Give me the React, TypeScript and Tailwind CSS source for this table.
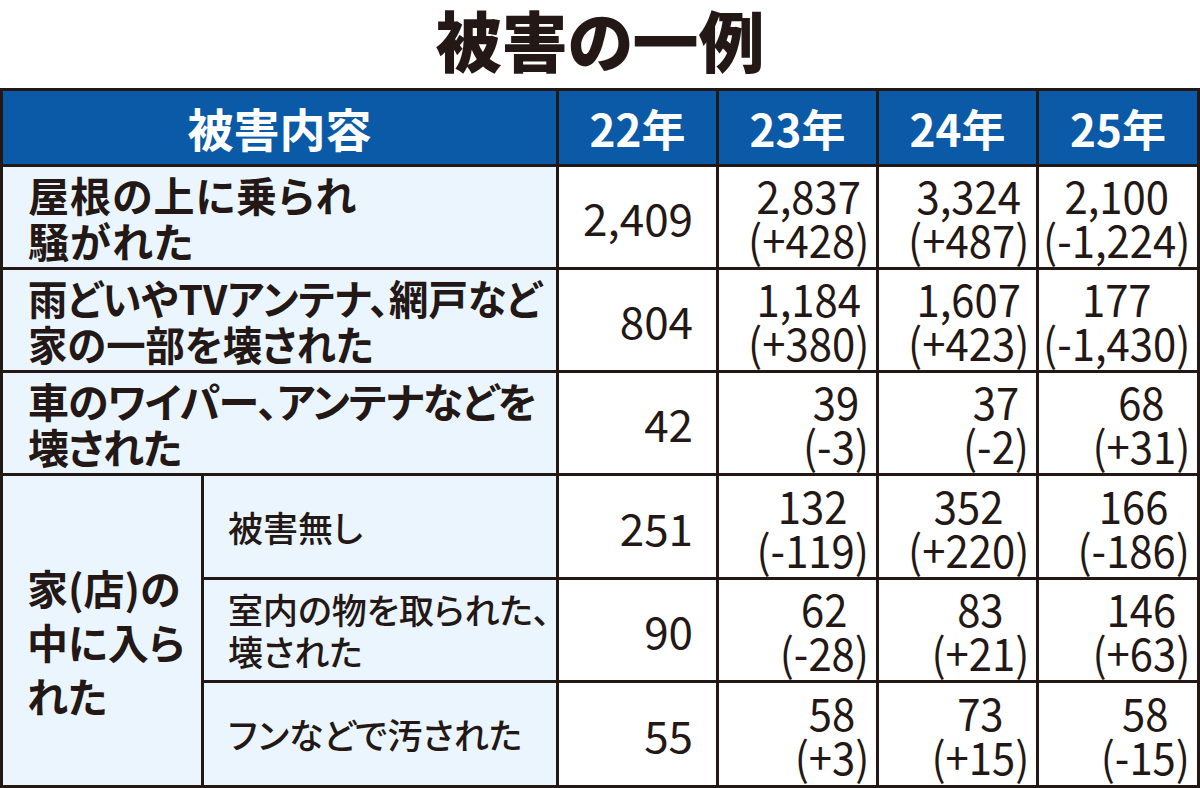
const jp = "font-['Noto_Sans_CJK_JP','Noto_Sans_CJK_SC',sans-serif]";

type Val = { n: string; d?: string };

const rows: { label: React.ReactNode; fit: string; base: string; vals: Val[] }[] = [
  {
    label: (
      <>
        屋根の上に乗られ
        <br />
        騒がれた
      </>
    ),
    fit: 'tracking-[1px]',
    base: '2,409',
    vals: [
      { n: '2,837', d: '(+428)' },
      { n: '3,324', d: '(+487)' },
      { n: '2,100', d: '(-1,224)' },
    ],
  },
  {
    label: (
      <>
        雨どいやTVアンテナ、網戸など
        <br />
        家の一部を壊された
      </>
    ),
    fit: 'scale-x-[0.96]',
    base: '804',
    vals: [
      { n: '1,184', d: '(+380)' },
      { n: '1,607', d: '(+423)' },
      { n: '177', d: '(-1,430)' },
    ],
  },
  {
    label: (
      <>
        車のワイパー、アンテナなどを
        <br />
        壊された
      </>
    ),
    fit: 'tracking-[-1px]',
    base: '42',
    vals: [
      { n: '39', d: '(-3)' },
      { n: '37', d: '(-2)' },
      { n: '68', d: '(+31)' },
    ],
  },
]

const subRows: { label: React.ReactNode; base: string; vals: Val[] }[] = [
  {
    label: '被害無し',
    base: '251',
    vals: [
      { n: '132', d: '(-119)' },
      { n: '352', d: '(+220)' },
      { n: '166', d: '(-186)' },
    ],
  },
  {
    label: (
      <>
        室内の物を取られた、
        <br />
        壊された
      </>
    ),
    base: '90',
    vals: [
      { n: '62', d: '(-28)' },
      { n: '83', d: '(+21)' },
      { n: '146', d: '(+63)' },
    ],
  },
  {
    label: 'フンなどで汚された',
    base: '55',
    vals: [
      { n: '58', d: '(+3)' },
      { n: '73', d: '(+15)' },
      { n: '58', d: '(-15)' },
    ],
  },
]

function BaseCell({ v }: { v: string }) {
  return (
    <div className="bg-white flex items-center justify-end pr-[23px] text-[44px] leading-[44px] text-[#231815] [font-feature-settings:normal]">
      {v}
    </div>
  )
}

function ValCell({ v }: { v: Val }) {
  return (
    <div className="bg-white flex items-center justify-end pr-[7px] text-[45px] leading-[44px] text-[#231815] [font-feature-settings:normal]">
      <div className="text-center whitespace-nowrap origin-right scale-x-[0.93]">
        <div>{v.n}</div>
        {v.d && <div>{v.d}</div>}
      </div>
    </div>
  )
}

export default function App() {
  return (
    <div className={`w-[1200px] h-[788px] bg-white ${jp} [font-feature-settings:'palt']`}>
      {/* Title */}
      <div className="h-[88px] flex items-center justify-center pb-[12px]">
        <h1 className="text-[66px] leading-[70px] font-black text-[#231815]">被害の一例</h1>
      </div>

      {/* Table */}
      <div className="grid grid-cols-[198px_352px_157px_157px_157px_158px] grid-rows-[73px_100px_100px_100px_101px_100px_102px] gap-[3px] p-[3px] bg-[#231815]">
        <div className="col-span-2 bg-[#0b5aa8] flex items-center justify-center text-white text-[46px] font-bold">
          被害内容
        </div>
        {['22年', '23年', '24年', '25年'].map((y) => (
          <div key={y} className="bg-[#0b5aa8] flex items-center justify-center text-white text-[44px] font-bold">
            {y}
          </div>
        ))}

        {rows.map((r, i) => (
          <div key={i} className="contents">
            <div className="col-span-2 bg-[#eaf5fd] flex items-center pl-[25px] text-[41px] leading-[46px] font-bold text-[#231815] whitespace-nowrap overflow-hidden">
              <div className={`inline-block origin-left ${r.fit}`}>{r.label}</div>
            </div>
            <BaseCell v={r.base} />
            {r.vals.map((v, j) => (
              <ValCell key={j} v={v} />
            ))}
          </div>
        ))}

        <div className="row-span-3 bg-[#eaf5fd] flex items-center pl-[24px] pt-[20px] text-[41px] leading-[54px] font-bold text-[#231815] whitespace-nowrap">
          <div>
            家(店)の
            <br />
            中に入ら
            <br />
            れた
          </div>
        </div>
        {subRows.map((r, i) => (
          <div key={i} className="contents">
            <div className="bg-[#eaf5fd] flex items-center pl-[24px] text-[35px] leading-[42px] font-medium text-[#231815] whitespace-nowrap overflow-hidden">
              <div>{r.label}</div>
            </div>
            <BaseCell v={r.base} />
            {r.vals.map((v, j) => (
              <ValCell key={j} v={v} />
            ))}
          </div>
        ))}
      </div>
    </div>
  )
}
